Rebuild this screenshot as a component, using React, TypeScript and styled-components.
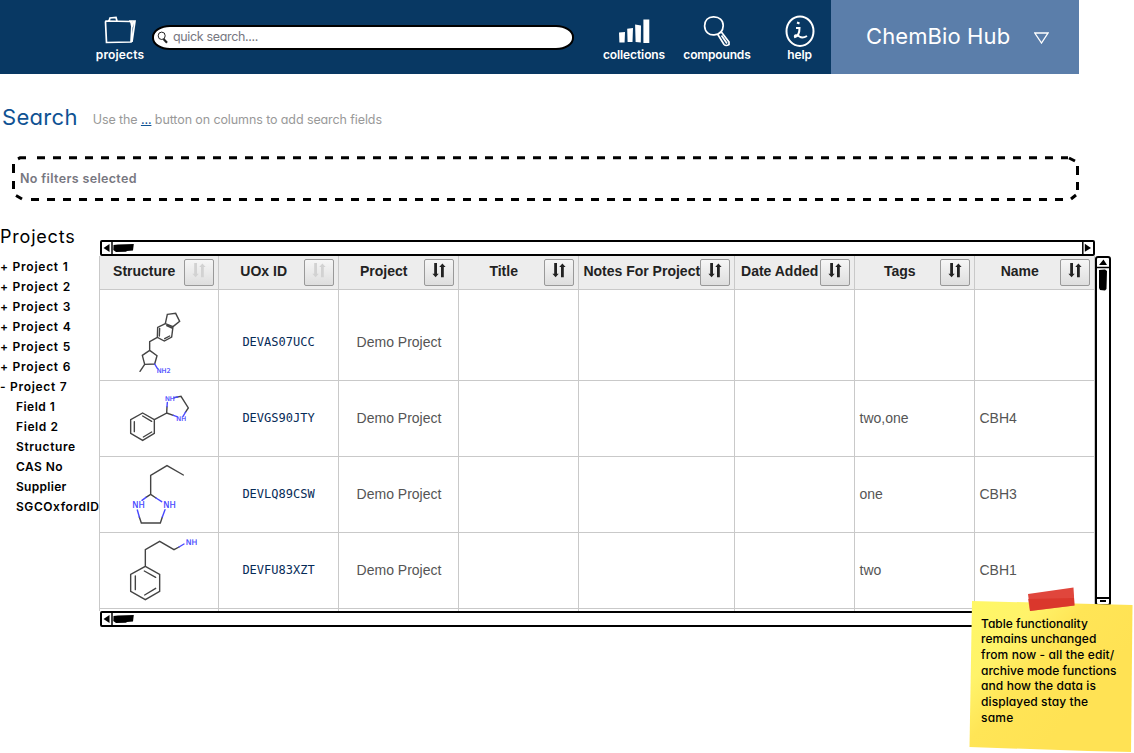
import React from 'react';
import styled, { createGlobalStyle } from 'styled-components';

const GlobalStyle = createGlobalStyle`
  * { box-sizing: border-box; }
  body { margin: 0; background: #fff; overflow: hidden; }
`;

const Page = styled.div`
  position: relative;
  width: 1134px;
  height: 753px;
  overflow: hidden;
  font-family: Inter, 'Liberation Sans', sans-serif;
  font-feature-settings: 'cv11' 1;
  color: #000;
`;

const Text = styled.span<{ $size: number; $weight?: number; $track?: number; $color?: string }>`
  font-size: ${p => p.$size}px;
  font-weight: ${p => p.$weight ?? 400};
  letter-spacing: ${p => p.$track ?? 0}px;
  color: ${p => p.$color ?? 'inherit'};
  line-height: 20px;
  white-space: nowrap;
`;

const Header = styled.header`
  display: flex;
  width: 1079px;
  height: 74px;
  background: #083863;
  color: #fff;
`;

const MainNav = styled.nav`
  display: flex;
  width: 831px;
  padding-left: 92px;
`;

const NavItem = styled.a<{ $width: number; $gap?: number }>`
  display: flex;
  flex-direction: column;
  align-items: center;
  width: ${p => p.$width}px;
  margin-left: ${p => p.$gap ?? 0}px;
  padding-top: 14px;
  svg { display: block; flex: none; margin-bottom: -10px; }
  span { margin-top: auto; margin-bottom: 9.5px; }
`;

const SearchBox = styled.div`
  display: flex;
  align-items: center;
  width: 422px;
  height: 25px;
  margin: 25px 0 0 4px;
  padding-left: 3px;
  gap: 4px;
  background: #fff;
  border: 2px solid #000;
  border-radius: 18px / 12px;
  span { margin-top: -1px; }
`;

const HubMenu = styled.div`
  display: flex;
  align-items: center;
  width: 248px;
  height: 74px;
  padding-left: 35px;
  gap: 24px;
  background: #5b7eaa;
  span { margin-top: -2px; }
  svg { margin-top: 2px; }
`;

const SearchHeading = styled.div`
  display: flex;
  align-items: center;
  height: 24px;
  margin-top: 31px;
  padding-left: 2px;
`;

const Hint = styled.div`
  margin: 4px 0 0 15px;
  line-height: 20px;
`;

const More = styled.a`
  color: #0f5293;
  text-decoration: underline;
`;

const Filters = styled.section`
  position: relative;
  display: flex;
  align-items: center;
  width: 1068px;
  height: 46px;
  margin: 27px 0 0 12px;
  padding-left: 8px;
`;

const DashedFrame = styled.svg`
  position: absolute;
  inset: 0;
`;

const Body = styled.div`
  display: flex;
  margin-top: 25px;
`;

const Sidebar = styled.aside`
  width: 99px;
  flex: none;
`;

const SidebarTitle = styled.div`
  height: 30px;
`;

const TreeRow = styled.div<{ $child?: boolean }>`
  display: flex;
  height: 20px;
  padding-left: ${p => (p.$child ? 16 : 0)}px;
`;

const TablePane = styled.main`
  width: 996px;
  padding-top: 13px;
`;

const HScroll = styled.div`
  display: flex;
  align-items: center;
  width: 995px;
  height: 16px;
  margin-left: 1px;
  background: #fff;
  border: 2px solid #000;
  border-radius: 2px;
`;

const HThumb = styled.svg`
  margin-right: auto;
`;

const VScroll = styled.div`
  display: flex;
  flex-direction: column;
  align-items: center;
  justify-content: space-between;
  width: 16px;
  height: 350px;
  margin-top: 29px;
  border: 2px solid #000;
  border-radius: 3px;
  svg { display: block; }
`;

const Grid = styled.div`
  height: 355px;
  overflow: hidden;
  border-left: 1px solid #c9c9c9;
  font-family: 'Liberation Sans', Arial, sans-serif;
  font-size: 14px;
`;

const Row = styled.div<{ $height: number; $head?: boolean }>`
  display: grid;
  grid-template-columns: 119px 120px 120px 120px 156px 120px 120px 120px;
  height: ${p => p.$height}px;
  border-bottom: 1px solid #c9c9c9;
  background: ${p => (p.$head ? '#ededed' : '#fff')};
`;

const HeadCell = styled.div`
  display: flex;
  align-items: flex-start;
  padding: 3px 4px 0 4px;
  border-right: 1px solid #c9c9c9;
  color: #222;
  font-weight: 700;
`;

const HeadLabel = styled.span`
  flex: 1;
  min-width: 0;
  padding-left: 0.4px;
  line-height: 25px;
  text-align: center;
  white-space: nowrap;
`;

const SortButton = styled.button<{ $off?: boolean }>`
  display: flex;
  justify-content: center;
  width: 30px;
  height: 27px;
  flex: none;
  padding: 3px 0 0 0;
  border: 1px solid #999;
  border-radius: 2px;
  background: linear-gradient(#f6f6f6, #dedede);
  color: ${p => (p.$off ? '#d2d2d2' : '#222')};
`;

const Cell = styled.div<{ $align?: 'left' | 'center' }>`
  display: flex;
  align-items: center;
  justify-content: ${p => (p.$align === 'center' ? 'center' : 'flex-start')};
  padding: 0 0 0 ${p => (p.$align === 'center' ? 0 : 4.5)}px;
  border-right: 1px solid #c9c9c9;
  color: #555;
`;

const CellText = styled.span<{ $drop?: number }>`
  margin-top: ${p => p.$drop ?? 0}px;
`;

const ProjectName = styled(CellText)`
  padding-left: 1px;
`;

const CompoundId = styled(CellText)`
  font-family: 'DejaVu Sans Mono', monospace;
  font-size: 12px;
  color: #062b57;
`;

const Note = styled.div`
  position: absolute;
  left: 968px;
  top: 584px;
  width: 166px;
  height: 169px;
  padding: 31.5px 0 0 13px;
`;

const NotePaper = styled.svg`
  position: absolute;
  left: 0;
  top: 0;
`;

const NoteText = styled.div`
  position: relative;
  display: flex;
  flex-direction: column;
`;

const NoteLine = styled(Text)`
  line-height: 15.7px;
`;

const SortArrows = () => (
  <svg width="16" height="15" viewBox="0 0 16 15" fill="currentColor">
    <path d="M3.2 0h2.800v10.800h1.700L4.600 14.300 1.400 10.800h1.800zM10 14.300V4H8.200l3.200-3.600L14.600 4h-1.800v10.300z" />
  </svg>
);

const FolderIcon = () => (
  <svg width="32" height="32" viewBox="0 0 32 32" fill="none" stroke="#fff" strokeWidth="1.700">
    <path d="M1.500 8 2.500 28.500 27 28 28 9.500 26 7.500 2 7zM5 7 6 4 12 3.500 13 7M25 7H31L28 28M27 8 28 13 29.500 7" />
  </svg>
);

const BarsIcon = () => (
  <svg width="34" height="32" viewBox="0 0 34 32" fill="#fff">
    <path d="M2 18.500 8 18 7.600 28.500H2.400zM10.200 14.800 16 14 15.500 28H10.600zM18.100 10.500 24 11.400 23.800 28.600 18.600 28zM26.400 5.500H32.300V29H26.400z" />
  </svg>
);

const LensIcon = () => (
  <svg width="30" height="34" viewBox="0 0 30 34" fill="none" stroke="#fff" strokeWidth="1.700">
    <path d="M11.800 2.800C6 2.600 2.500 6.500 2.600 12c.2 6 4.500 9.300 9.600 8.900 5-.5 8.800-3.600 9-9.300C21.200 6 17 3 11.800 2.800zM15.500 20 22 30.500 Q24 32.500 27 30.500L27 28 19 17.500M19.500 21.500 25 29.500" />
  </svg>
);

const InfoIcon = () => (
  <svg width="32" height="34" viewBox="0 0 32 34" fill="none" stroke="#fff" strokeWidth="2">
    <ellipse cx="16" cy="17.200" rx="13.500" ry="14.800" />
    <path d="M12 14H15.500C15.500 18 14.500 22 11 23 10 21 13 20.500 15.500 22.500 17.500 24 20.500 23.500 23 22" />
    <path d="M13 8.500 15.500 9.500" />
  </svg>
);

const SmallLens = () => (
  <svg width="12" height="13" viewBox="0 0 12 13" fill="none" stroke="#222">
    <ellipse cx="4.700" cy="4.800" rx="3.500" ry="3.700" strokeWidth="1" />
    <path d="M6.500 8 10 11.800" strokeWidth="2.200" />
  </svg>
);

const ScrollEnd = ({ right }: { right?: boolean }) => (
  <svg width="11" height="12" viewBox="0 0 11 12">
    <path d={right ? 'M.8 0V12' : 'M10 0V12'} stroke="#000" strokeWidth="1.500" />
    <path d={right ? 'M2.800 1.800V9.800L9 6z' : 'M7.500 2V10L1.500 6z'} />
  </svg>
);

const HorizontalScrollbar = ({ end = true }: { end?: boolean }) => (
  <HScroll>
    <ScrollEnd />
    <HThumb width="22" height="12" viewBox="0 0 22 12">
      <path d="M.5 3 5 2.500 20.800 2 20 8.500 14 9 13 9.800 3 10 .3 8z" />
    </HThumb>
    {end && <ScrollEnd right />}
  </HScroll>
);

type Label = [number, number, string, number];
interface Molecule { bonds: string; blue: string; labels: Label[]; viewBox: string; height: number }

const molecules: Molecule[] = [
  {
    viewBox: '0 0 354 270', height: 90,
    bonds: 'M202 73 227 70 239 94 219 110 196 101zM196 101 173 112 172 142 193 153 215 141 219 110M200 107 216 114M179 115 178 138M194 146 209 138M172 142 149 155 149 181M149 181 171 197 164 222 134 223 127 196zM134 223 120 244',
    blue: 'M164 222 172 235', labels: [[170, 250, 'NH2', 19.5]],
  },
  {
    viewBox: '0 273 354 225', height: 75,
    bonds: 'M128 369 163 389 163 430 128 451 92 430 92 389zM128 378 155 394M155 426 130 441M103 395V425M163 389 200 369 201 350M200 369 220 376M223 323 243 319 265 354 256 367',
    blue: 'M201 350 202 337M220 376 231 380M223 323 233 321M249 379 257 366', labels: [[195, 334, 'NH', 19.5], [229, 393, 'NH', 19.5]],
  },
  {
    viewBox: '0 6 354 225', height: 75,
    bonds: 'M250 60 201 32 152 61V118L138 127M152 118 168 129M118 186 124 204 181 204 187 186',
    blue: 'M138 127 126 136M168 129 185 140M112 165 118 186M195 164 187 186', labels: [[97, 160, 'NH', 25], [190, 160, 'NH', 25]],
  },
  {
    viewBox: '0 234 354 225', height: 75,
    bonds: 'M136 334 179 358V409L136 434 92 409V358zM133 348 167 367M167 400 134 420M106 363V404M136 334V284L179 259 222 284 237 276',
    blue: 'M237 276 252 267', labels: [[257, 269, 'NH', 23]],
  },
];

const MoleculeDrawing = ({ m }: { m: Molecule }) => (
  <svg width="118" height={m.height} viewBox={m.viewBox} fill="none" strokeWidth="4.200" strokeLinecap="round">
    <path d={m.bonds} stroke="#444" />
    <path d={m.blue} stroke="#4848ff" />
    {m.labels.map(([x, y, t, s]) => (
      <text key={`${x}-${y}`} x={x} y={y} fontSize={s} fill="#4040ff" stroke="#4040ff" strokeWidth=".5" fontFamily="DejaVu Sans, sans-serif">{t}</text>
    ))}
  </svg>
);

const columns = ['Structure', 'UOx ID', 'Project', 'Title', 'Notes For Project', 'Date Added', 'Tags', 'Name'];
const compounds = [
  { id: 'DEVAS07UCC', tags: '', name: '' },
  { id: 'DEVGS90JTY', tags: 'two,one', name: 'CBH4' },
  { id: 'DEVLQ89CSW', tags: 'one', name: 'CBH3' },
  { id: 'DEVFU83XZT', tags: 'two', name: 'CBH1' },
];
const projects = [1, 2, 3, 4, 5, 6];
const fields: [string, number][] = [['Field 1', 0.45], ['Field 2', 0.6], ['Structure', 0.6], ['CAS No', 0.45], ['Supplier', 0.3], ['SGCOxfordID', 0.55]];
const noteLines: [string, number][] = [
  ['Table functionality', -0.02], ['remains unchanged', 0.05], ['from now - all the edit/', 0.12],
  ['archive mode functions', 0], ['and how the data is', 0.1], ['displayed stay the', 0.1], ['same', 0.2],
];

export default function App() {
  return (
    <Page>
      <GlobalStyle />
      <Header>
        <MainNav>
          <NavItem $width={56}><FolderIcon /><Text $size={12} $weight={600} $track={0.15}>projects</Text></NavItem>
          <SearchBox><SmallLens /><Text $size={12.5} $track={-0.35} $color="#777780">quick search....</Text></SearchBox>
          <NavItem $width={80} $gap={20}><BarsIcon /><Text $size={12} $weight={600} $track={-0.1}>collections</Text></NavItem>
          <NavItem $width={80} $gap={3}><LensIcon /><Text $size={12} $weight={600} $track={-0.15}>compounds</Text></NavItem>
          <NavItem $width={40} $gap={22.5}><InfoIcon /><Text $size={12} $weight={600} $track={-0.15}>help</Text></NavItem>
        </MainNav>
        <HubMenu>
          <Text $size={22} $track={0.1}>ChemBio Hub</Text>
          <svg width="15" height="12" viewBox="0 0 15 12" fill="none" stroke="#fff" strokeWidth="1.300">
            <path d="M.8 1H14L7.500 11z" />
          </svg>
        </HubMenu>
      </Header>

      <SearchHeading>
        <Text $size={22} $color="#0f5293" $track={0.3}>Search</Text>
        <Hint>
          <Text $size={12.5} $color="#999" $track={-0.1}>Use the <More>...</More> button on columns to add search fields</Text>
        </Hint>
      </SearchHeading>

      <Filters>
        <DashedFrame width="1068" height="46" viewBox="0 0 1068 46" fill="none" stroke="#000" strokeWidth="3">
          <path d="M6 2.800 8 1.800H14" />
          <path d="M25 1.800H1056" strokeDasharray="8 8" />
          <path d="M19 43.500H1056" strokeDasharray="8 8" />
          <path d="M1.500 8V17M1.500 25V33M4 39.500 10 43M1057 2 1063 5M1065.500 10V19M1065.500 26V34M1064 39 1059 43" />
        </DashedFrame>
        <Text $size={12.5} $weight={600} $color="#777780" $track={0.35}>No filters selected</Text>
      </Filters>

      <Body>
        <Sidebar>
          <SidebarTitle><Text $size={18} $track={0.8}>Projects</Text></SidebarTitle>
          {projects.map(n => (
            <TreeRow key={n}><Text $size={12} $weight={600} $track={0.75}>+ Project {n}</Text></TreeRow>
          ))}
          <TreeRow><Text $size={12} $weight={600} $track={0.7}>- Project 7</Text></TreeRow>
          {fields.map(([name, track]) => (
            <TreeRow key={name} $child><Text $size={12} $weight={600} $track={track}>{name}</Text></TreeRow>
          ))}
        </Sidebar>

        <TablePane>
          <HorizontalScrollbar />
          <Grid>
            <Row $height={34} $head>
              {columns.map((c, i) => (
                <HeadCell key={c}>
                  <HeadLabel>{c}</HeadLabel>
                  <SortButton $off={i < 2}><SortArrows /></SortButton>
                </HeadCell>
              ))}
            </Row>
            {compounds.map((c, i) => {
              const drop = i === 0 ? 14 : -2;
              return (
                <Row key={c.id} $height={molecules[i].height + 1}>
                  <Cell $align="center"><MoleculeDrawing m={molecules[i]} /></Cell>
                  <Cell $align="center"><CompoundId $drop={drop}>{c.id}</CompoundId></Cell>
                  <Cell $align="center"><ProjectName $drop={drop}>Demo Project</ProjectName></Cell>
                  <Cell /><Cell /><Cell />
                  <Cell><CellText $drop={drop}>{c.tags}</CellText></Cell>
                  <Cell><CellText $drop={drop}>{c.name}</CellText></Cell>
                </Row>
              );
            })}
            <Row $height={20}>{columns.map(c => <Cell key={c} />)}</Row>
          </Grid>
          <HorizontalScrollbar end={false} />
        </TablePane>
        <VScroll>
          <svg width="12" height="34" viewBox="0 0 12 34">
            <path d="M0 9.500H12" stroke="#000" strokeWidth="1.500" />
            <path d="M2 7H10L6.500 1.500zM2 12 8 11.500 10 13 9.500 31 8 32.500 3 32 2 30z" />
          </svg>
          <svg width="12" height="9" viewBox="0 0 12 9"><path d="M0 3H12M3 6H9" stroke="#000" strokeWidth="2" /></svg>
        </VScroll>
      </Body>

      <Note>
        <NotePaper width="166" height="169" viewBox="0 0 166 169">
          <defs>
            <linearGradient id="paper" x1="0" y1="0" x2=".75" y2=".6">
              <stop offset="0" stopColor="#fff866" />
              <stop offset=".35" stopColor="#fff36a" />
              <stop offset=".6" stopColor="#ffe556" />
              <stop offset="1" stopColor="#ffe254" />
            </linearGradient>
          </defs>
          <path d="M4 17 164.500 21 163 168 120 167 1.500 163z" fill="url(#paper)" />
          <path d="M60 10 105.500 3.500 106.500 21.500 62 27z" fill="#e0463c" />
          <path d="M60 15 106 14 106.500 21.500 62 27z" fill="#d62d22" opacity=".6" />
        </NotePaper>
        <NoteText>
          {noteLines.map(([line, track]) => <NoteLine key={line} $size={12} $track={track} $weight={500}>{line}</NoteLine>)}
        </NoteText>
      </Note>
    </Page>
  );
}
